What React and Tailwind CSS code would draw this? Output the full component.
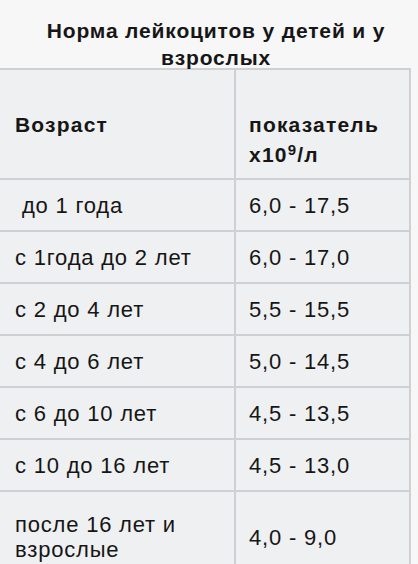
import React from 'react';

const ROWS = [
    { age: '\u00a0до 1 года', value: '6,0 - 17,5' },
    { age: 'с 1года до 2 лет', value: '6,0 - 17,0' },
    { age: 'с 2 до 4 лет', value: '5,5 - 15,5' },
    { age: 'с 4 до 6 лет', value: '5,0 - 14,5' },
    { age: 'с 6 до 10 лет', value: '4,5 - 13,5' },
    { age: 'с 10 до 16 лет', value: '4,5 - 13,0' },
];

const App = () => {
    return (
        <div className="w-[418px] h-[564px] overflow-hidden bg-[#f7f7f8] text-[#161616] font-['Liberation_Sans',Arial,sans-serif]">
            {/* Caption */}
            <div className="h-[68px] pt-[17px] pl-[14px] text-center text-[21px] leading-[27px] font-bold tracking-[0.85px]">
                <div>Норма лейкоцитов у детей и у</div>
                <div>взрослых</div>
            </div>

            <div className="border-t-2 border-r-2 border-[#cfd0d3] bg-[#eff0f2] w-[411px]">
                {/* Header row */}
                <div className="grid grid-cols-[236px_1fr] h-[110px] border-b-2 border-[#cfd0d3] text-[21px] leading-[30px] font-bold tracking-[1.2px]">
                    <div className="border-r-2 border-[#cfd0d3] pl-[15px] pt-[40px]">Возраст</div>
                    <div className="pl-[13px] pt-[40px]">
                        <div>показатель</div>
                        <div>
                            x10<span className="relative -top-[7px] text-[15px]">9</span>/л
                        </div>
                    </div>
                </div>

                {ROWS.map((row, i) => (
                    <div key={i} className="grid grid-cols-[236px_1fr] h-[52px] border-b-2 border-[#cfd0d3] text-[22px] tracking-[0.8px]">
                        <div className="border-r-2 border-[#cfd0d3] pl-[15px] flex items-center">{row.age}</div>
                        <div className="pl-[13px] flex items-center">{row.value}</div>
                    </div>
                ))}

                {/* Last row */}
                <div className="grid grid-cols-[236px_1fr] h-[90px] text-[22px] tracking-[0.8px]">
                    <div className="border-r-2 border-[#cfd0d3] pl-[15px] flex items-center leading-[25px]">
                        <div>
                            <div>после 16 лет и</div>
                            <div>взрослые</div>
                        </div>
                    </div>
                    <div className="pl-[13px] flex items-center">4,0 - 9,0</div>
                </div>
            </div>
        </div>
    );
};

export default App;
